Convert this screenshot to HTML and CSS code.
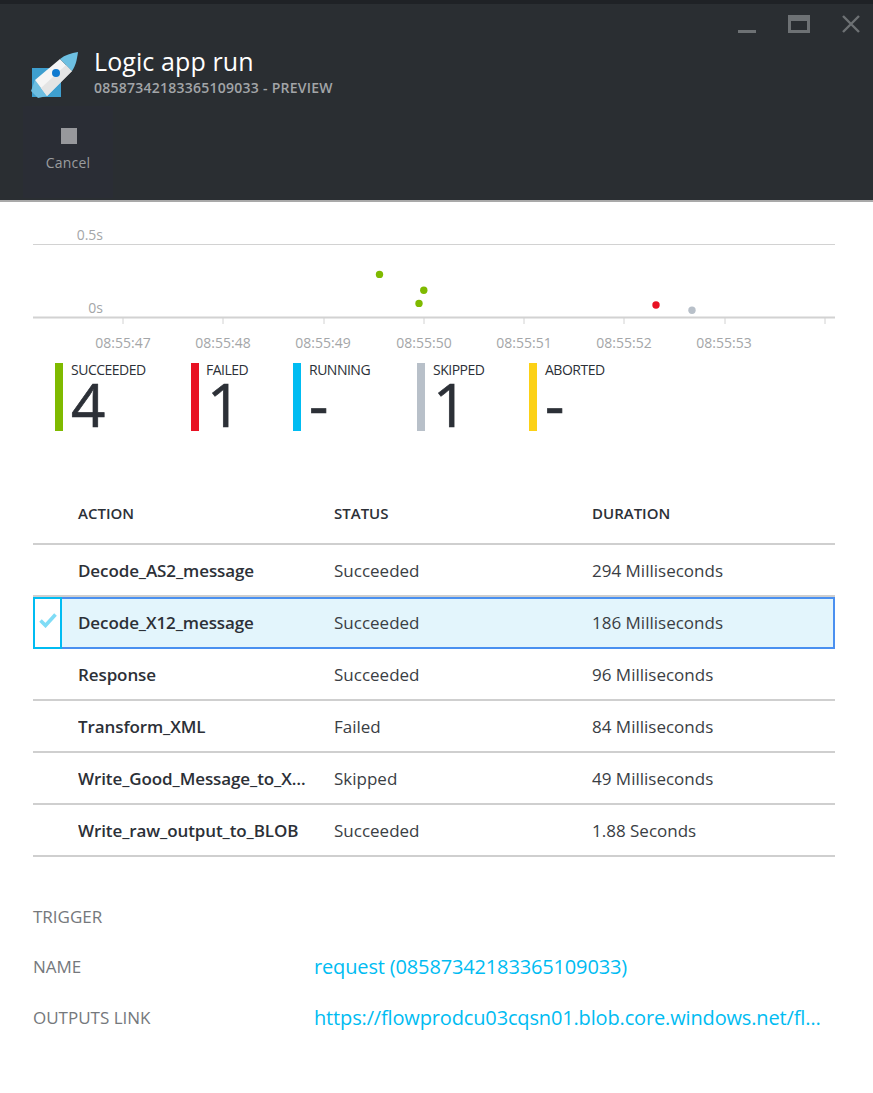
FILE: index.html
```html
<!DOCTYPE html>
<html lang="en">
<head>
    <meta charset="UTF-8">
    <title>Logic app run</title>
    <link rel="stylesheet" href="styles.css">
</head>
<body>
    <header class="blade-header">
        <div class="window-controls">
            <svg class="win-icon" width="18" height="18" viewBox="0 0 18 18"><rect x="0" y="15" width="18" height="3" fill="#6d7174"/></svg>
            <svg class="win-icon" width="22" height="18" viewBox="0 0 22 18"><path d="M0 0H22V18H0Z M3 6V15H19V6Z" fill="#6d7174" fill-rule="evenodd"/></svg>
            <svg class="win-icon" width="18" height="18" viewBox="0 0 18 18"><path d="M1 1L17 17M17 1L1 17" stroke="#6d7174" stroke-width="2.4" fill="none"/></svg>
        </div>
        <div class="title-row">
            <svg class="rocket" width="47" height="46" viewBox="0 0 47 46">
                <rect x="1" y="16" width="29" height="29" fill="#3e9fcf"/>
                <path d="M4 28L16 44L7 46L0 39Z" fill="#6cbde0"/>
                <path d="M4 28L29 7L41 19L16 44Z" fill="#f5f5f5"/>
                <path d="M10 36L35 13L41 19L16 44Z" fill="#e4e4e4"/>
                <path d="M29 7C34 3 40 1 47 0C46 7 45 13 41 19Z" fill="#6dc0e2"/>
                <circle cx="25" cy="21" r="4" fill="#0f7ad0"/>
            </svg>
            <div>
                <h1 class="title">Logic app run</h1>
                <div class="subtitle">08587342183365109033 - PREVIEW</div>
            </div>
        </div>
        <button class="cmd-button" type="button">
            <span class="stop-icon"></span>
            <span>Cancel</span>
        </button>
    </header>

    <main class="content">
        <svg class="chart" width="802" height="138" viewBox="33 222 802 138">
            <g class="chart-lines">
                <line x1="33" x2="835" y1="244.5" y2="244.5"/>
                <line class="axis" x1="33" x2="835" y1="317.5" y2="317.5"/>
                <path d="M123 318v6M223 318v6M324 318v6M424 318v6M524 318v6M624 318v6M725 318v6M825 318v6"/>
            </g>
            <g class="chart-text">
                <text x="103" y="240" text-anchor="end">0.5s</text>
                <text x="103" y="313" text-anchor="end">0s</text>
                <text x="123" y="348" text-anchor="middle">08:55:47</text>
                <text x="223" y="348" text-anchor="middle">08:55:48</text>
                <text x="323" y="348" text-anchor="middle">08:55:49</text>
                <text x="424" y="348" text-anchor="middle">08:55:50</text>
                <text x="524" y="348" text-anchor="middle">08:55:51</text>
                <text x="624" y="348" text-anchor="middle">08:55:52</text>
                <text x="724" y="348" text-anchor="middle">08:55:53</text>
            </g>
            <circle cx="379.5" cy="274.4" r="3.7" fill="#7fba00"/>
            <circle cx="423.8" cy="290.2" r="3.7" fill="#7fba00"/>
            <circle cx="419" cy="303.4" r="3.7" fill="#7fba00"/>
            <circle cx="656" cy="305" r="3.7" fill="#e81123"/>
            <circle cx="692" cy="310.2" r="3.7" fill="#b8c0c9"/>
        </svg>

        <div class="legend">
            <div class="stat stat-succeeded"><span class="stat-label">SUCCEEDED</span><span class="stat-value">4</span></div>
            <div class="stat stat-failed"><span class="stat-label">FAILED</span><span class="stat-value">1</span></div>
            <div class="stat stat-running"><span class="stat-label">RUNNING</span><span class="stat-value">-</span></div>
            <div class="stat stat-skipped"><span class="stat-label">SKIPPED</span><span class="stat-value">1</span></div>
            <div class="stat stat-aborted"><span class="stat-label">ABORTED</span><span class="stat-value">-</span></div>
        </div>

        <div class="actions">
            <div class="row row-head">
                <div></div><div>ACTION</div><div>STATUS</div><div>DURATION</div>
            </div>
            <div class="row">
                <div class="check-cell"></div><div class="name">Decode_AS2_message</div><div>Succeeded</div><div>294 Milliseconds</div>
            </div>
            <div class="row row-selected">
                <div class="check-cell">
                    <svg class="check" width="18" height="15" viewBox="0 0 18 15"><path d="M1.5 7.5L6.5 12.5L16.5 1.5" stroke="#7fdcf6" stroke-width="3.6" fill="none"/></svg>
                </div>
                <div class="name">Decode_X12_message</div><div>Succeeded</div><div>186 Milliseconds</div>
            </div>
            <div class="row">
                <div class="check-cell"></div><div class="name">Response</div><div>Succeeded</div><div>96 Milliseconds</div>
            </div>
            <div class="row">
                <div class="check-cell"></div><div class="name">Transform_XML</div><div>Failed</div><div>84 Milliseconds</div>
            </div>
            <div class="row">
                <div class="check-cell"></div><div class="name">Write_Good_Message_to_XML_output</div><div>Skipped</div><div>49 Milliseconds</div>
            </div>
            <div class="row">
                <div class="check-cell"></div><div class="name">Write_raw_output_to_BLOB</div><div>Succeeded</div><div>1.88 Seconds</div>
            </div>
        </div>

        <div class="trigger">
            <div class="prop-label">TRIGGER</div><div></div>
            <div class="prop-label">NAME</div><div class="prop-link">request (08587342183365109033)</div>
            <div class="prop-label">OUTPUTS LINK</div><div class="prop-link">https://flowprodcu03cqsn01.blob.core.windows.net/flow-logs/outputs</div>
        </div>
    </main>
</body>
</html>
```

FILE: styles.css
```css
* {
    box-sizing: border-box;
}

body {
    margin: 0;
    background: #fff;
    color: #2c3037;
    font-family: "Open Sans", "Noto Sans", sans-serif;
    overflow: hidden;
}

.blade-header {
    height: 202px;
    padding-top: 48px;
    background: #2a2e32;
    border-top: 4px solid #1f2226;
    border-bottom: 2px solid #a9a9a9;
    position: relative;
}

.window-controls {
    position: absolute;
    top: 11px;
    right: 13px;
    display: flex;
    gap: 32px;
}

.title-row {
    display: flex;
    gap: 16px;
    padding-left: 31px;
}

.title {
    margin: -6px 0 0;
    color: #fff;
    font-size: 25px;
    font-weight: 400;
    line-height: 30px;
    letter-spacing: 0.1px;
}

.subtitle {
    margin-top: 3px;
    color: #a2a5a8;
    font-size: 14px;
    font-weight: 600;
    line-height: 18px;
    letter-spacing: 0.25px;
}

.cmd-button {
    display: flex;
    flex-direction: column;
    align-items: center;
    gap: 9px;
    width: 90px;
    height: 92px;
    margin: 8px 0 0 23px;
    padding: 22px 0 0;
    background: #2a2d35;
    border: none;
    color: #9a9c9f;
    font-family: inherit;
    font-size: 14px;
    letter-spacing: 0.2px;
}

.stop-icon {
    width: 16px;
    height: 16px;
    margin-left: 2px;
    background: #97989c;
}

.content {
    padding: 20px 38px 0 33px;
}

.chart {
    display: block;
}

.chart-lines line, .chart-lines path {
    stroke: #d2d2d2;
    stroke-width: 1;
}

.chart-lines .axis {
    stroke-width: 2;
}

.chart-text text {
    fill: #a4a6a8;
    font-size: 14px;
}

.legend {
    display: flex;
    margin: 3px 0 0 22px;
}

.stat {
    height: 68px;
    padding-left: 8px;
    border-left: 8px solid;
    display: flex;
    flex-direction: column;
}

.stat-succeeded { border-color: #7fba00; width: 136px; }
.stat-failed { border-color: #e81123; width: 102px; }
.stat-running { border-color: #00bcf2; width: 124px; }
.stat-skipped { border-color: #b8c0c9; width: 112px; }
.stat-aborted { border-color: #fcd116; }

.stat-label {
    font-size: 14px;
    line-height: 14px;
    letter-spacing: -0.5px;
}

.stat-failed .stat-label {
    margin-left: -1px;
}

.stat-value {
    font-size: 60px;
    line-height: 54px;
    -webkit-text-stroke: 0.7px #2c3037;
}

.actions {
    margin-top: 64px;
}

.row {
    display: grid;
    grid-template-columns: 45px 256px 258px 1fr;
    align-items: center;
    height: 52px;
    padding-top: 1px;
    font-size: 17px;
    color: #3a3e44;
    border-bottom: 2px solid #cfcfcf;
}

.row-head {
    height: 50px;
    padding: 0 0 12px;
    font-size: 15px;
    font-weight: 600;
    color: #2c3037;
}

.name {
    font-weight: 600;
    color: #2c3037;
    letter-spacing: -0.1px;
    padding-right: 22px;
    white-space: nowrap;
    overflow: hidden;
    text-overflow: ellipsis;
}

.row-selected {
    grid-template-columns: 29px 272px 258px 1fr;
    padding: 0;
    border-bottom: none;
}

.row-selected .check-cell {
    height: 52px;
    border: 2px solid #00bcf2;
    display: flex;
    align-items: center;
    justify-content: center;
}

.check {
    margin-bottom: 5px;
}

.row-selected .name, .row-selected > div:nth-child(3), .row-selected > div:nth-child(4) {
    height: 52px;
    line-height: 48px;
    background: #e3f5fc;
    border-top: 2px solid #4a90f0;
    border-bottom: 2px solid #4a90f0;
}

.row-selected .name {
    padding-left: 16px;
}

.row-selected > div:nth-child(4) {
    border-right: 2px solid #4a90f0;
}

.trigger {
    display: grid;
    grid-template-columns: 281px 1fr;
    grid-auto-rows: 50.5px;
    align-items: center;
    margin-top: 34px;
}

.prop-label {
    font-size: 17px;
    color: #75787c;
}

.prop-link {
    font-size: 20px;
    color: #00bcf2;
    letter-spacing: -0.15px;
    white-space: nowrap;
    overflow: hidden;
    text-overflow: ellipsis;
    width: 507px;
}
```
